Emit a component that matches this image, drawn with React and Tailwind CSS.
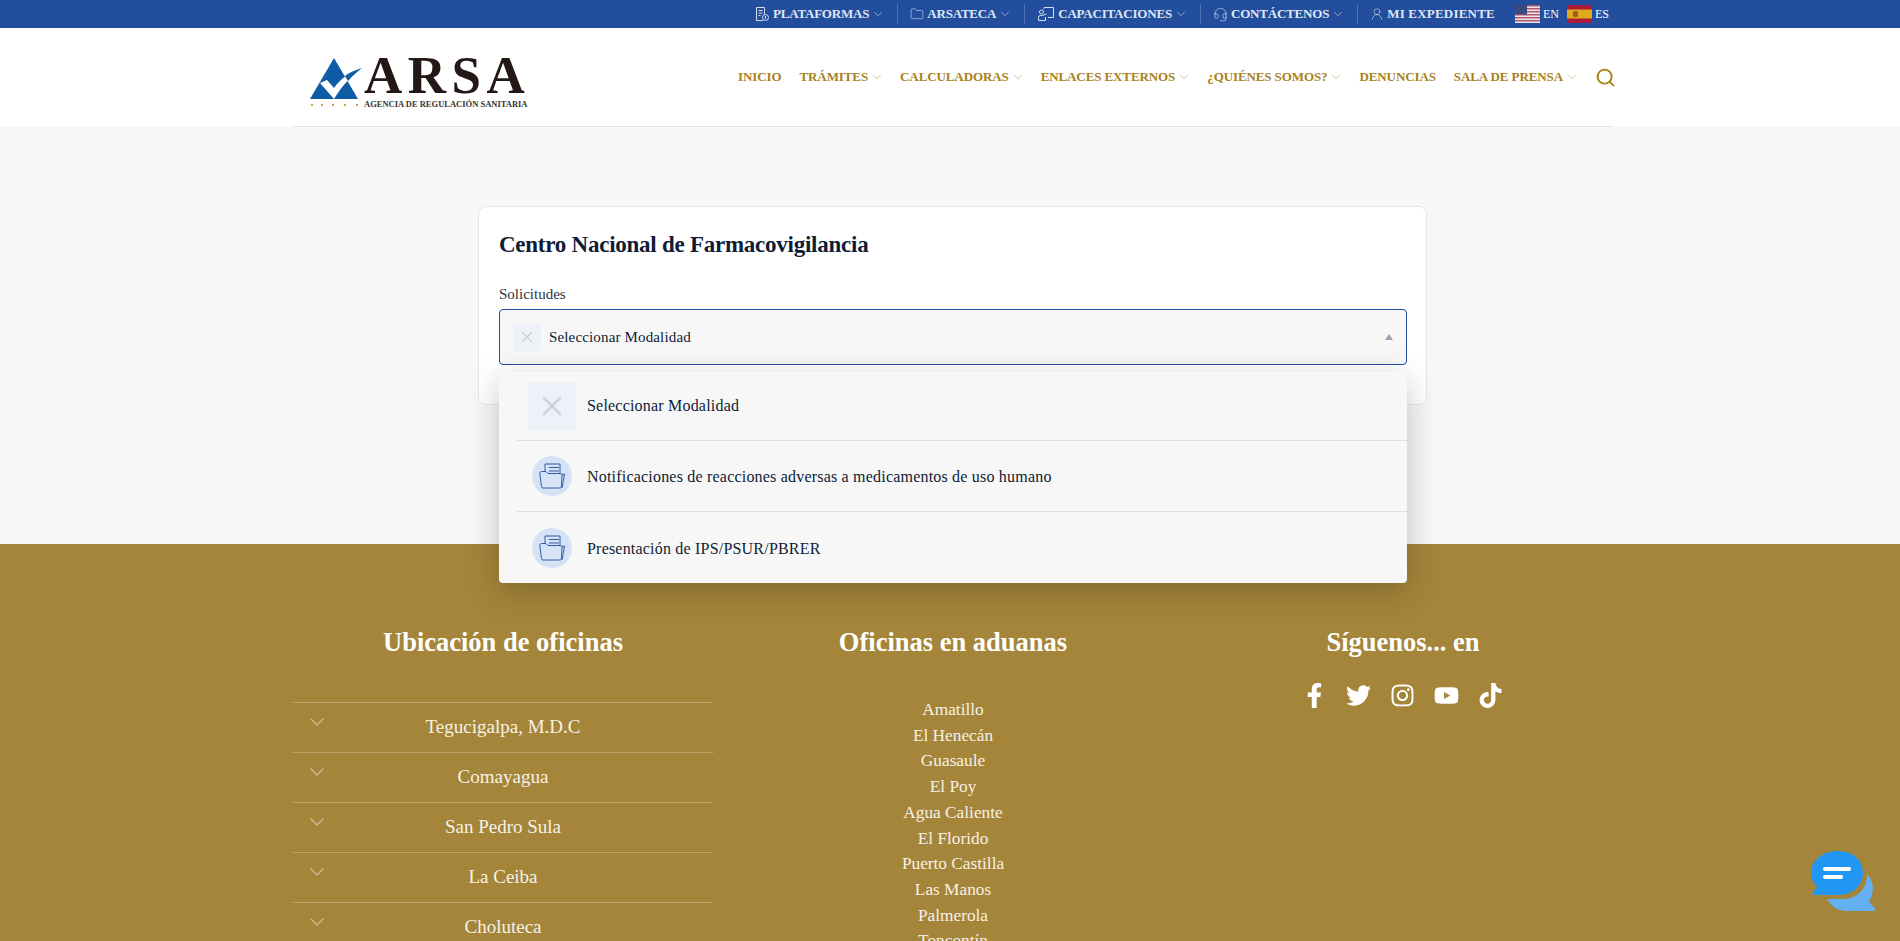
import React from "react";
import { ChevronDown, Folder, UserRound, Headset, Search, X } from "lucide-react";
import { FaFacebookF, FaTwitter, FaInstagram, FaYoutube, FaTiktok } from "react-icons/fa";

const serif = { fontFamily: '"Liberation Serif", serif' };

const UsFlag = () => (
  <svg width="25" height="18" viewBox="0 0 25 18">
    <rect width="25" height="18" fill="#e8e6ee" />
    {[0, 3, 6, 9, 12, 15].map((y) => (
      <rect key={y} y={y} width="25" height="1.5" fill="#b5566c" />
    ))}
    <rect width="12" height="9.5" fill="#3b4b80" />
  </svg>
);

const EsFlag = () => (
  <svg width="25" height="18" viewBox="0 0 25 18">
    <rect width="25" height="18" fill="#ab1c3a" />
    <rect y="4.5" width="25" height="9" fill="#e0ab1a" />
    <rect x="6" y="6" width="5" height="6" rx="1.5" fill="#a85a2a" />
  </svg>
);

const PlatformIcon = () => (
  <svg width="16" height="16" viewBox="0 0 16 16" fill="none" stroke="currentColor" strokeWidth="1">
    <path d="M9 14.5H2.5v-13h8V8" />
    <path d="M4.5 4.5h4M4.5 7h4M4.5 9.5h2" />
    <circle cx="11.5" cy="11.5" r="3" />
    <path d="M11.5 10v3" />
  </svg>
);

const TrainingIcon = () => (
  <svg width="18" height="16" viewBox="0 0 18 16" fill="none" stroke="currentColor" strokeWidth="1">
    <path d="M7 3V1.5h9.5v10H11" />
    <circle cx="4.5" cy="6" r="2" />
    <path d="M1.5 14.5v-3a2 2 0 0 1 2-2h2l4-1.5M1.5 14.5h7V11" />
  </svg>
);

const FolderDoc = () => (
  <svg width="26" height="26" viewBox="0 0 26 26" fill="none" stroke="#2f5ba8" strokeWidth="1">
    <path d="M6 8V1h15v9.5" />
    <path d="M10 4.5h10M10 8h10" />
    <path d="M1 12 L2.5 23.5 a1.5 1.5 0 0 0 1.5 1.5 H21 a1.5 1.5 0 0 0 1.5-1.5 L23 12 a1.5 1.5 0 0 0-1.5-1.5 H9 L7 8.5 H2.5 A1.5 1.5 0 0 0 1 10 Z" fill="#d8e4f6" />
    <path d="M23 11.5 L25.5 11 L23 25" />
  </svg>
);

const Logo = () => (
  <div className="flex self-start ml-[17px] mt-[25px]">
    <svg width="54" height="54" viewBox="0 0 54 54" className="mt-[5px]">
      <path d="M24 0 L48 41 L0 41 Z" fill="#0f5ba6" />
      <path d="M10 25 L17 22 L24 30 C30 21 40 14 52 10 C41 18 32 28 24 41 Z" fill="#fff" />
      <path d="M35 18 C40 14 46 12 52 10 C47 14 42 18 38 23 Z" fill="#0f5ba6" />
      {[1, 11, 22, 34, 46].map((x) => (
        <rect key={x} x={x} y="46" width="2" height="2" fill="#c9a24a" />
      ))}
    </svg>
    <div className="flex flex-col">
      <span className="text-[53px] leading-[44px] font-bold text-[#231815] tracking-[5.5px]" style={serif}>
        ARSA
      </span>
      <span className="mt-[2px] text-[8.5px] leading-[10px] font-bold text-[#3a3230] whitespace-nowrap" style={serif}>
        AGENCIA DE REGULACIÓN SANITARIA
      </span>
    </div>
  </div>
);

const TopItem = ({ icon, label, chevron, sep }) => (
  <div className={`flex items-center ${sep ? "pr-[12px] mr-[12px] border-r border-[#4e72b4] h-[20px]" : ""}`}>
    <span className="mr-[3px] text-[#d5dff0]">{icon}</span>
    <span className={`text-[13px] font-bold text-[#dfe6f3] ${sep ? "tracking-[-0.2px]" : "tracking-[0.2px]"}`}>{label}</span>
    {chevron && <ChevronDown size={14} strokeWidth={1} className="ml-[2px] text-[#d5dff0]" />}
  </div>
);

const NavItem = ({ label, chevron }) => (
  <div className="flex items-center">
    <span className="text-[13px] font-bold text-[#a9821a] tracking-[-0.1px] whitespace-nowrap">{label}</span>
    {chevron && <ChevronDown size={14} strokeWidth={1} className="ml-[2px] -mr-[2px] text-[#b89a4a]" />}
  </div>
);

const Option = ({ text, last }) => (
  <div className={`flex items-center ml-[18px] ${last ? "h-[72px]" : "h-[71px] border-b border-[#dcdfe4]"}`}>
    <div className="w-[40px] h-[40px] ml-[15px] mr-[15px] rounded-full bg-[#d5e2f5] flex items-center justify-center">
      <FolderDoc />
    </div>
    <span className="mt-[2px] text-[16px] text-[#0e1c36] tracking-[0.2px]">{text}</span>
  </div>
);

const offices = ["Tegucigalpa, M.D.C", "Comayagua", "San Pedro Sula", "La Ceiba", "Choluteca"];
const customs = ["Amatillo", "El Henecán", "Guasaule", "El Poy", "Agua Caliente", "El Florido", "Puerto Castilla", "Las Manos", "Palmerola", "Toncontín"];

export default function App() {
  return (
    <div className="relative h-[941px] overflow-hidden bg-[#f7f7f7]" style={serif}>
      {/* top bar */}
      <div className="h-[28px] bg-[#234e9e] flex items-center pl-[754px]">
        <TopItem sep chevron label="PLATAFORMAS" icon={<PlatformIcon />} />
        <TopItem sep chevron label="ARSATECA" icon={<Folder size={14} strokeWidth={1} />} />
        <TopItem sep chevron label="CAPACITACIONES" icon={<TrainingIcon />} />
        <TopItem sep chevron label="CONTÁCTENOS" icon={<Headset size={15} strokeWidth={1} />} />
        <TopItem label="MI EXPEDIENTE" icon={<UserRound size={14} strokeWidth={1} />} />
        <div className="flex items-center ml-[20px]">
          <UsFlag />
          <span className="ml-[3px] text-[12px] text-white">EN</span>
          <div className="ml-[8px]"><EsFlag /></div>
          <span className="ml-[3px] text-[12px] text-white">ES</span>
        </div>
      </div>

      {/* header */}
      <div className="bg-white h-[99px]">
        <div className="w-[1320px] h-[99px] ml-[293px] border-b border-[#e4e4e4] flex items-center justify-between">
          <Logo />
          <div className="flex items-center gap-[18px]">
            <NavItem label="INICIO" />
            <NavItem label="TRÁMITES" chevron />
            <NavItem label="CALCULADORAS" chevron />
            <NavItem label="ENLACES EXTERNOS" chevron />
            <NavItem label="¿QUIÉNES SOMOS?" chevron />
            <NavItem label="DENUNCIAS" />
            <NavItem label="SALA DE PRENSA" chevron />
            <Search size={21} strokeWidth={2.2} className="-mr-[3px] text-[#a9821a]" />
          </div>
        </div>
      </div>

      {/* main */}
      <div className="h-[417px] pt-[79px]">
        <div className="w-[949px] h-[199px] ml-[478px] bg-white border border-[#e6e6e6] rounded-[8px] px-[20px] pt-[24px]">
          <h1 className="text-[23px] leading-[28px] font-bold text-[#0e1c36] tracking-[-0.25px]">Centro Nacional de Farmacovigilancia</h1>
          <div className="mt-[26px] text-[15px] leading-[18px] text-[#2b3441]">Solicitudes</div>
          <div className="mt-[6px] h-[56px] w-[908px] bg-[#f7f7f7] border border-[#234e9e] rounded-[4px] flex items-center pl-[13px] pr-[13px]">
            <div className="w-[28px] h-[28px] bg-[#eef1f8] rounded-[2px] flex items-center justify-center">
              <X size={18} strokeWidth={1.5} className="text-[#c6cdd8]" />
            </div>
            <span className="ml-[8px] text-[15px] text-[#0e1c36] tracking-[0.15px]">Seleccionar Modalidad</span>
            <div className="ml-auto w-0 h-0 border-l-[4px] border-r-[4px] border-b-[6px] border-l-transparent border-r-transparent border-b-[#9aa3af]" />
          </div>
        </div>
      </div>

      {/* footer */}
      <div className="h-[397px] bg-[#a5853a] text-white">
        <div className="w-[1320px] ml-[293px] grid grid-cols-3 gap-[30px]">
          <div>
            <h2 className="mt-[81px] text-[26.5px] leading-[36px] font-bold text-center -translate-y-[1px]">Ubicación de oficinas</h2>
            <div className="mt-[41px]">
              {offices.map((o) => (
                <div key={o} className="relative h-[50px] border-t border-[#bda66e] flex items-center justify-center text-[19px] text-[#f6f1e6]">
                  <ChevronDown size={24} strokeWidth={1.5} className="absolute left-[12px] top-[7px] text-[#c9b98e]" />
                  {o}
                </div>
              ))}
            </div>
          </div>
          <div>
            <h2 className="mt-[81px] text-[26.5px] leading-[36px] font-bold text-center -translate-y-[1px]">Oficinas en aduanas</h2>
            <div className="mt-[36px] text-center text-[17.3px] leading-[25.7px] text-[#f6f1e6]">
              {customs.map((c) => (
                <div key={c}>{c}</div>
              ))}
            </div>
          </div>
          <div>
            <h2 className="mt-[81px] text-[26.5px] leading-[36px] font-bold text-center -translate-y-[1px]">Síguenos... en</h2>
            <div className="mt-[22px] flex justify-center items-center text-[25px] pr-[1px]">
              <span className="w-[44px] flex justify-center"><FaFacebookF /></span>
              <span className="w-[44px] flex justify-center"><FaTwitter /></span>
              <span className="w-[44px] flex justify-center"><FaInstagram /></span>
              <span className="w-[44px] flex justify-center"><FaYoutube /></span>
              <span className="w-[44px] flex justify-center"><FaTiktok /></span>
            </div>
          </div>
        </div>
      </div>

      {/* open dropdown */}
      <div className="absolute left-[499px] top-[372px] w-[908px] h-[211px] bg-[#f7f7f7] rounded-[4px] shadow-[0_8px_32px_rgba(0,0,0,0.22)]">
        <div className="flex items-center h-[69px] ml-[18px] border-b border-[#dcdfe4]">
          <div className="w-[48px] h-[48px] ml-[11px] mr-[11px] bg-[#eef1f8] rounded-[2px] flex items-center justify-center">
            <X size={32} strokeWidth={2} className="text-[#cfd5df]" />
          </div>
          <span className="text-[16px] text-[#0e1c36] tracking-[0.2px]">Seleccionar Modalidad</span>
        </div>
        <Option text="Notificaciones de reacciones adversas a medicamentos de uso humano" />
        <Option last text="Presentación de IPS/PSUR/PBRER" />
      </div>

      {/* chat widget */}
      <svg width="66" height="62" viewBox="0 0 66 62" className="absolute left-[1811px] top-[851px]">
        <path d="M56 23 C63 30 64 42 58 50 L64 58 A1.5 1.5 0 0 1 63 60 L36 60 C26 60 20 55 16 48 L32 48 C46 48 56 38 56 23 Z" fill="#64b0f2" />
        <path d="M27 0 C42 0 52 9 52 22 C52 35 41 44 27 44 L3 44 A2 2 0 0 1 2 41 L6 36 C2 32 0 27 0 22 C0 9 12 0 27 0 Z" fill="#2196f3" />
        <rect x="12" y="16" width="28" height="4" rx="2" fill="#fff" />
        <rect x="12" y="24" width="20" height="4" rx="2" fill="#fff" />
      </svg>
    </div>
  );
}
